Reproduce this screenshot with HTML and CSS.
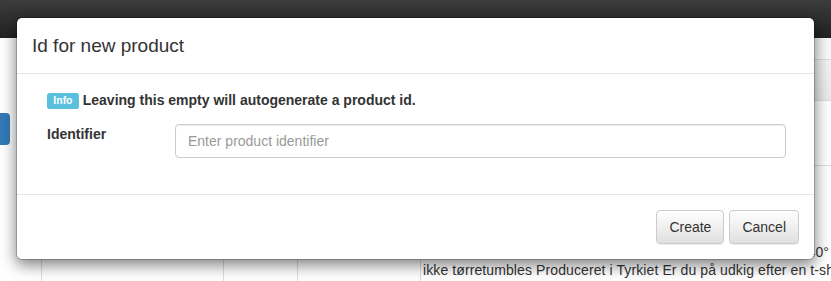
FILE: index.html
```html
<!DOCTYPE html>
<html lang="en">
<head>
<meta charset="utf-8">
<title>Id for new product</title>
<link rel="stylesheet" href="styles.css">
</head>
<body>
<header class="navbar"></header>
<main class="page">
  <aside class="side">
    <button class="side-btn" type="button"></button>
  </aside>
  <section class="content">
    <div class="toolbar"></div>
    <table class="grid">
      <thead>
        <tr><th class="c1"></th><th class="c2"></th><th class="c3"></th><th class="c4"></th></tr>
      </thead>
      <tbody>
        <tr class="row1"><td></td><td></td><td></td><td></td></tr>
        <tr class="row2">
          <td></td><td></td><td></td>
          <td class="desc">
            <div class="line">Klassisk t-shirt i blød økologisk bomuld</div>
            <div class="line">Fås i flere farver og størrelser</div>
            <div class="line">Materiale: 100% bomuld</div>
            <div class="line line-end">Maskinvask ved 40°</div>
            <div class="line">ikke tørretumbles Produceret i Tyrkiet Er du på udkig efter en t-shirt med et godt fit</div>
            <div class="line">så er denne et oplagt valg til hverdagen</div>
          </td>
        </tr>
      </tbody>
    </table>
  </section>
</main>

<div class="modal" role="dialog" aria-labelledby="modal-title">
  <div class="modal-header">
    <h4 class="modal-title" id="modal-title">Id for new product</h4>
  </div>
  <div class="modal-body">
    <p class="hint"><span class="label label-info">Info</span> Leaving this empty will autogenerate a product id.</p>
    <div class="form-row">
      <label class="control-label" for="identifier">Identifier</label>
      <input class="form-control" id="identifier" type="text" placeholder="Enter product identifier">
    </div>
  </div>
  <div class="modal-footer">
    <button class="btn" type="button">Create</button>
    <button class="btn" type="button">Cancel</button>
  </div>
</div>
</body>
</html>
```
FILE: styles.css
```css
* { box-sizing: border-box; }

html, body { margin: 0; padding: 0; }

body {
  width: 831px;
  height: 281px;
  overflow: hidden;
  position: relative;
  background: #fff;
  color: #333;
  font-family: "Liberation Sans", Arial, sans-serif;
  font-size: 14px;
  line-height: 1.42857;
}

/* ---------- background page ---------- */
.navbar {
  height: 38px;
  background: linear-gradient(#3c3c3c, #222);
}

.page {
  display: grid;
  grid-template-columns: 41px 900px;
}

.side { padding-top: 75px; }

.side-btn {
  display: block;
  width: 60px;
  height: 32px;
  margin-left: -50px;
  border: 0;
  border-radius: 4px;
  background: #337ab7;
}

.toolbar {
  height: 21px;
  background: #f9f9f9;
}

.grid {
  width: 860px;
  table-layout: fixed;
  border-collapse: separate;
  border-spacing: 0;
  border-left: 1px solid #ddd;
}

.grid th,
.grid td {
  padding: 0;
  border-right: 1px solid #ddd;
  border-bottom: 1px solid #ddd;
  vertical-align: top;
}

.grid th {
  height: 42px;
  border-top: 1px solid #ddd;
  background: linear-gradient(#f3f3f3, #e9e9e9);
}

.grid .c1 { width: 182px; }
.grid .c2 { width: 74px; }
.grid .c3 { width: 123px; }

.row1 td { height: 65px; }

.grid .desc {
  padding: 23px 0 0 2px;
  line-height: 18px;
  letter-spacing: 0.1px;
  white-space: nowrap;
}

.line-end {
  width: 406px;
  text-align: right;
}

/* ---------- modal ---------- */
.modal {
  position: absolute;
  left: 16px;
  top: 17px;
  width: 799px;
  background: #fff;
  border: 1px solid rgba(0, 0, 0, 0.2);
  border-radius: 6px;
  box-shadow: 0 5px 15px rgba(0, 0, 0, 0.5);
  background-clip: padding-box;
}

.modal-header {
  padding: 15px;
  border-bottom: 1px solid #e5e5e5;
}

.modal-title {
  margin: 0;
  font-size: 19px;
  font-weight: normal;
  line-height: 25px;
}

.modal-body {
  padding: 16px 28px 36px 30px;
}

.hint {
  margin: 0 0 14px;
  font-weight: bold;
  line-height: 20px;
}

.label {
  display: inline-block;
  padding: 0.2em 0.6em 0.3em;
  font-size: 75%;
  font-weight: bold;
  line-height: 1;
  color: #fff;
  vertical-align: 1px;
  border-radius: 0.25em;
}

.label-info { background: #5bc0de; }

.form-row {
  display: grid;
  grid-template-columns: 128px 1fr;
  align-items: start;
}

.control-label {
  font-weight: bold;
  line-height: 20px;
}

.form-control {
  display: block;
  width: 100%;
  height: 34px;
  padding: 6px 12px;
  font: inherit;
  font-size: 14px;
  line-height: 20px;
  color: #555;
  background: #fff;
  border: 1px solid #ccc;
  border-radius: 4px;
  box-shadow: inset 0 1px 1px rgba(0, 0, 0, 0.075);
}

.form-control::placeholder { color: #999; }

.modal-footer {
  display: flex;
  justify-content: flex-end;
  gap: 5px;
  padding: 15px;
  border-top: 1px solid #e5e5e5;
}

.btn {
  height: 34px;
  padding: 6px 12px;
  font: inherit;
  font-size: 14px;
  line-height: 20px;
  color: #333;
  background: linear-gradient(#fff, #e0e0e0);
  border: 1px solid #ccc;
  border-radius: 4px;
  box-shadow: inset 0 1px 0 rgba(255, 255, 255, 0.15), 0 1px 1px rgba(0, 0, 0, 0.075);
}
```
